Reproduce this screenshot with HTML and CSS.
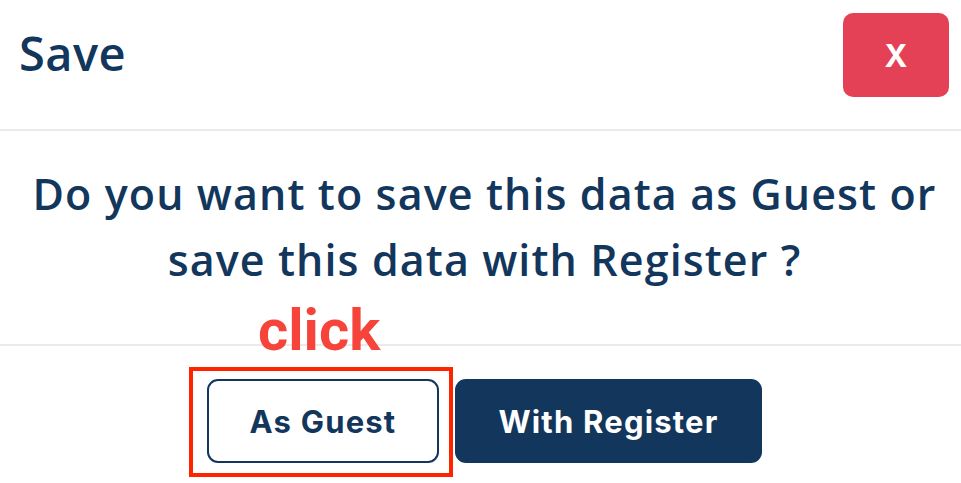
FILE: index.html
```html
<!DOCTYPE html>
<html lang="en">
<head>
<meta charset="utf-8">
<title>Save</title>
<link rel="stylesheet" href="styles.css">
</head>
<body>
<div class="modal">
  <header class="modal-header">
    <h1 class="modal-title">Save</h1>
    <button class="close-btn" type="button">X</button>
  </header>
  <section class="modal-body">
    <p class="question">Do you want to save this data as Guest or save this data with Register ?</p>
  </section>
  <footer class="modal-footer">
    <div class="guest-wrap">
      <span class="click-note">click</span>
      <button class="btn btn-outline" type="button">As Guest</button>
    </div>
    <button class="btn btn-solid" type="button">With Register</button>
  </footer>
</div>
</body>
</html>
```

FILE: styles.css
```css
*, *::before, *::after { box-sizing: border-box; }
html, body { margin: 0; padding: 0; background: #ffffff; }
body { width: 961px; height: 483px; overflow: hidden; font-family: "Open Sans", "Noto Sans", sans-serif; color: #12365c; }

.modal { display: flex; flex-direction: column; }

.modal-header {
  height: 131px;
  display: flex;
  align-items: flex-start;
  justify-content: space-between;
  padding: 13px 12px 0 19px;
  border-bottom: 2px solid #e7ebef;
}
.modal-title {
  margin: 0;
  margin-top: 12px;
  font-size: 47px;
  font-weight: 600;
  line-height: 56px;
  letter-spacing: 0.4px;
}
.close-btn {
  width: 106px;
  height: 84px;
  border: none;
  border-radius: 10px;
  background: #e54156;
  color: #ffffff;
  font-family: "Inter", "Liberation Sans", sans-serif;
  font-weight: 700;
  font-size: 31px;
  padding: 0;
}

.modal-body {
  height: 215px;
  border-bottom: 2px solid #e7ebef;
  display: flex;
  justify-content: center;
  padding: 30px 0 0 8px;
}
.question {
  margin: 0;
  width: 930px;
  text-align: center;
  font-size: 43px;
  font-weight: 600;
  line-height: 66px;
  letter-spacing: 1.1px;
}

.modal-footer {
  display: flex;
  justify-content: center;
  gap: 16px;
  padding: 33px 0 0 8px;
}
.guest-wrap { position: relative; }
.click-note {
  position: absolute;
  left: 51px;
  top: -81px;
  font-family: "Roboto", sans-serif;
  font-weight: 700;
  font-size: 58px;
  line-height: 64px;
  color: #f6443b;
  white-space: nowrap;
}
.guest-wrap::after {
  content: "";
  position: absolute;
  left: -18px;
  top: -12px;
  width: 264px;
  height: 110px;
  border: 4px solid #ff2400;
  pointer-events: none;
}
.btn {
  height: 84px;
  border-radius: 11px;
  font-family: "Inter", sans-serif;
  font-weight: 700;
  font-size: 31px;
  letter-spacing: 1.2px;
  padding: 0;
}
.btn-outline {
  width: 232px;
  background: #ffffff;
  border: 2px solid #12365c;
  color: #12365c;
}
.btn-solid {
  width: 307px;
  background: #12365c;
  border: none;
  color: #ffffff;
}
```
